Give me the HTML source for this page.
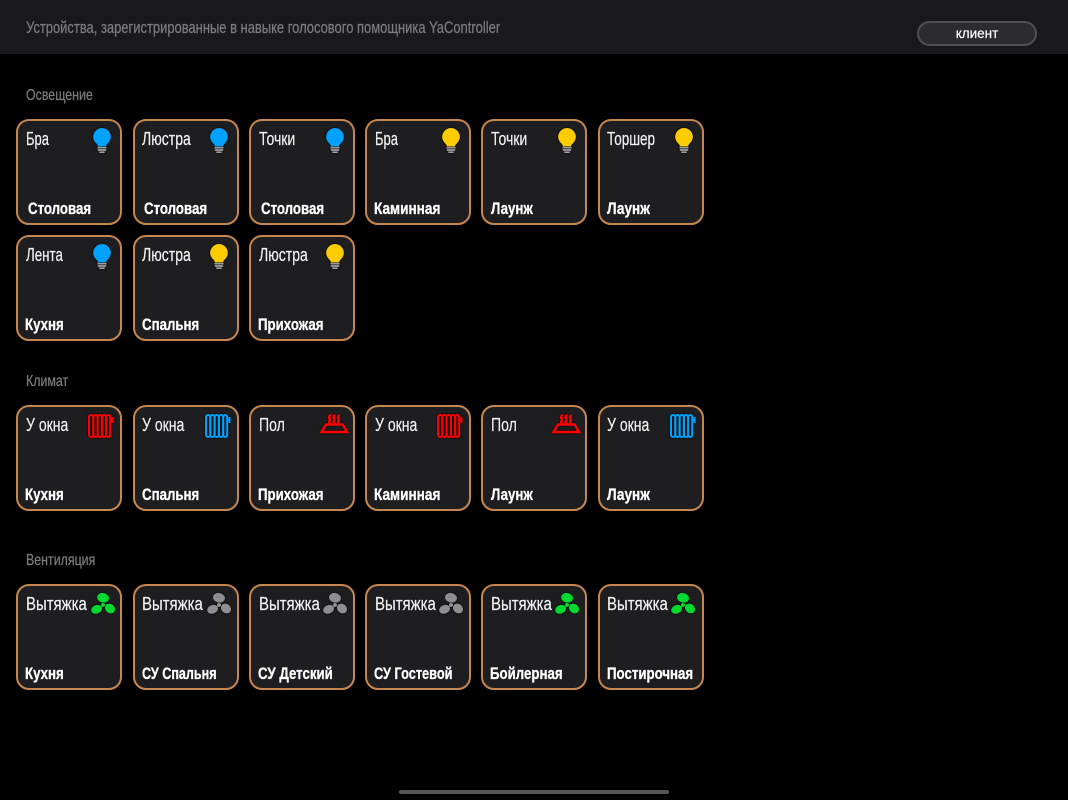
<!DOCTYPE html>
<html lang="ru"><head><meta charset="utf-8"><title>YaController</title>
<style>
html,body{margin:0;padding:0;background:#000;width:1068px;height:800px;overflow:hidden}
body{position:relative;font-family:"Liberation Sans","DejaVu Sans",sans-serif}
#hd{position:absolute;left:0;top:0;width:1068px;height:54px;background:#19191b}
.t{position:absolute;white-space:nowrap;transform-origin:0 50%;line-height:20px;height:20px}
.h{color:#7c7c7e;font-size:16px;transform:scaleX(.775);-webkit-text-stroke:.25px #7c7c7e}
#btn{position:absolute;left:917px;top:21px;width:116px;height:21px;border:2px solid #505052;border-radius:14px;background:#2c2c2e;color:#fff;font-size:13.500px;text-align:center;line-height:21px;-webkit-text-stroke:.2px #fff}
.c{position:absolute;width:102px;height:102px;border:2px solid #c68650;border-radius:13px;background:#1e1e20}
.n{left:8px;top:8px;color:#f2f2f2;font-size:18px;transform:scaleX(.78);-webkit-text-stroke:.2px #f2f2f2}
.v{transform:scaleX(.83)}
.r{top:78px;color:#fff;font-size:17px;font-weight:bold;transform:scaleX(.78);-webkit-text-stroke:.3px #fff}
.c svg{position:absolute;overflow:visible;filter:drop-shadow(0 0 1px #000)}
.b{left:70px;top:4px;width:28px;height:28px}
.w{left:66px;top:5px;width:30px;height:30px}
.f{left:69px;top:5px;width:30px;height:30px}
#bar{position:absolute;left:399px;top:790px;width:270px;height:4px;border-radius:2px;background:#565658}
</style></head><body>
<svg width="0" height="0" style="position:absolute"><defs>
<g id="bulb"><path d="M14 3a8.800 8.800 0 0 0-5.600 15.600c1.100 .9 1.300 1.600 1.400 2.800h8.400c.1-1.200 .3-1.900 1.400-2.800A8.800 8.800 0 0 0 14 3z" fill="currentColor"/><path d="M9.500 22.700h9M9.800 25h8.400M11.300 27.200h5.400" stroke="#a0a0a2" stroke-width="1.700" fill="none"/></g>
<g id="rad" fill="none" stroke="currentColor" stroke-width="2"><rect x="5" y="3" width="4.300" height="22" rx="2.100"/><rect x="9.300" y="3" width="4.300" height="22" rx="2.100"/><rect x="13.600" y="3" width="4.300" height="22" rx="2.100"/><rect x="17.900" y="3" width="4.300" height="22" rx="2.100"/><rect x="22.200" y="3" width="4" height="22" rx="2"/><path d="M26 8h3.500M28.500 5v6"/></g>
<g id="floor" fill="none" stroke="currentColor" stroke-width="2.500"><path d="M4.500 20h25.500l-4.500-7.500h-16.500z"/><path d="M12.500 12c-1.500-2.500 1.500-3.500 0-5.500s1-2.500 0-4M17 12c-1.500-2.500 1.500-3.500 0-5.500s1-2.500 0-4M21.500 12c-1.500-2.500 1.500-3.500 0-5.500s1-2.500 0-4"/></g>
<g id="fan" fill="currentColor"><circle cx="16" cy="14" r="2"/><ellipse cx="16" cy="6.800" rx="6" ry="4.800" transform="rotate(12 16 6.800)"/><ellipse cx="9.600" cy="18.300" rx="5.600" ry="4.200" transform="rotate(-20 9.600 18.300)"/><ellipse cx="23" cy="17.500" rx="5.400" ry="4.500" transform="rotate(40 23 17.500)"/></g>
</defs></svg>
<div id="hd"></div>
<div class="t h" style="left:26px;top:18px;font-size:16.500px;transform:scaleX(.785)">Устройства, зарегистрированные в навыке голосового помощника YaController</div>
<div id="btn">клиент</div>
<div class="t h" style="left:26px;top:86px">Освещение</div>
<div class="t h" style="left:26px;top:372px">Климат</div>
<div class="t h" style="left:26px;top:551px">Вентиляция</div>

<div class="c" style="left:16px;top:119px"><div class="t n" style="transform:scaleX(.72)">Бра</div><svg class="b" viewBox="0 0 28 28" color="#00a2ff"><use href="#bulb"/></svg><div class="t r" style="left:10px">Столовая</div></div>
<div class="c" style="left:133px;top:119px"><div class="t n" style="left:7px">Люстра</div><svg class="b" viewBox="0 0 28 28" color="#00a2ff"><use href="#bulb"/></svg><div class="t r" style="left:9px">Столовая</div></div>
<div class="c" style="left:249px;top:119px"><div class="t n">Точки</div><svg class="b" viewBox="0 0 28 28" color="#00a2ff"><use href="#bulb"/></svg><div class="t r" style="left:10px">Столовая</div></div>
<div class="c" style="left:365px;top:119px"><div class="t n" style="transform:scaleX(.72)">Бра</div><svg class="b" viewBox="0 0 28 28" color="#ffcc00"><use href="#bulb"/></svg><div class="t r" style="left:7px;transform:scaleX(.8)">Каминная</div></div>
<div class="c" style="left:481px;top:119px"><div class="t n">Точки</div><svg class="b" viewBox="0 0 28 28" color="#ffcc00"><use href="#bulb"/></svg><div class="t r" style="left:8px">Лаунж</div></div>
<div class="c" style="left:598px;top:119px"><div class="t n" style="left:7px;transform:scaleX(.75)">Торшер</div><svg class="b" viewBox="0 0 28 28" color="#ffcc00"><use href="#bulb"/></svg><div class="t r" style="left:7px;transform:scaleX(.8)">Лаунж</div></div>

<div class="c" style="left:16px;top:235px"><div class="t n" style="transform:scaleX(.74)">Лента</div><svg class="b" viewBox="0 0 28 28" color="#00a2ff"><use href="#bulb"/></svg><div class="t r" style="left:7px">Кухня</div></div>
<div class="c" style="left:133px;top:235px"><div class="t n" style="left:7px">Люстра</div><svg class="b" viewBox="0 0 28 28" color="#ffcc00"><use href="#bulb"/></svg><div class="t r" style="left:7px">Спальня</div></div>
<div class="c" style="left:249px;top:235px"><div class="t n">Люстра</div><svg class="b" viewBox="0 0 28 28" color="#ffcc00"><use href="#bulb"/></svg><div class="t r" style="left:7px">Прихожая</div></div>

<div class="c" style="left:16px;top:405px"><div class="t n">У окна</div><svg class="w" viewBox="0 0 30 30" color="#ff0000"><use href="#rad"/></svg><div class="t r" style="left:7px">Кухня</div></div>
<div class="c" style="left:133px;top:405px"><div class="t n" style="left:7px">У окна</div><svg class="w" viewBox="0 0 30 30" color="#00a2ff"><use href="#rad"/></svg><div class="t r" style="left:7px">Спальня</div></div>
<div class="c" style="left:249px;top:405px"><div class="t n">Пол</div><svg class="w" viewBox="0 0 30 30" color="#ff0000"><use href="#floor"/></svg><div class="t r" style="left:7px">Прихожая</div></div>
<div class="c" style="left:365px;top:405px"><div class="t n">У окна</div><svg class="w" viewBox="0 0 30 30" color="#ff0000"><use href="#rad"/></svg><div class="t r" style="left:7px;transform:scaleX(.8)">Каминная</div></div>
<div class="c" style="left:481px;top:405px"><div class="t n">Пол</div><svg class="w" viewBox="0 0 30 30" color="#ff0000"><use href="#floor"/></svg><div class="t r" style="left:8px">Лаунж</div></div>
<div class="c" style="left:598px;top:405px"><div class="t n" style="left:7px">У окна</div><svg class="w" viewBox="0 0 30 30" color="#00a2ff"><use href="#rad"/></svg><div class="t r" style="left:7px;transform:scaleX(.8)">Лаунж</div></div>

<div class="c" style="left:16px;top:584px"><div class="t n v">Вытяжка</div><svg class="f" viewBox="0 0 30 30" color="#00d92f"><use href="#fan"/></svg><div class="t r" style="left:7px">Кухня</div></div>
<div class="c" style="left:133px;top:584px"><div class="t n v" style="left:7px">Вытяжка</div><svg class="f" viewBox="0 0 30 30" color="#8e8e90" style="left:68px"><use href="#fan"/></svg><div class="t r" style="left:6.500px;transform:scaleX(.74)">СУ Спальня</div></div>
<div class="c" style="left:249px;top:584px"><div class="t n v">Вытяжка</div><svg class="f" viewBox="0 0 30 30" color="#8e8e90" style="left:68px"><use href="#fan"/></svg><div class="t r" style="left:7px">СУ Детский</div></div>
<div class="c" style="left:365px;top:584px"><div class="t n v">Вытяжка</div><svg class="f" viewBox="0 0 30 30" color="#8e8e90" style="left:68px"><use href="#fan"/></svg><div class="t r" style="left:7px;transform:scaleX(.75)">СУ Гостевой</div></div>
<div class="c" style="left:481px;top:584px"><div class="t n v">Вытяжка</div><svg class="f" viewBox="0 0 30 30" color="#00d92f" style="left:68px"><use href="#fan"/></svg><div class="t r" style="left:7px">Бойлерная</div></div>
<div class="c" style="left:598px;top:584px"><div class="t n v" style="left:7px">Вытяжка</div><svg class="f" viewBox="0 0 30 30" color="#00d92f" style="left:67px"><use href="#fan"/></svg><div class="t r" style="left:7px">Постирочная</div></div>
<div id="bar"></div>
</body></html>
